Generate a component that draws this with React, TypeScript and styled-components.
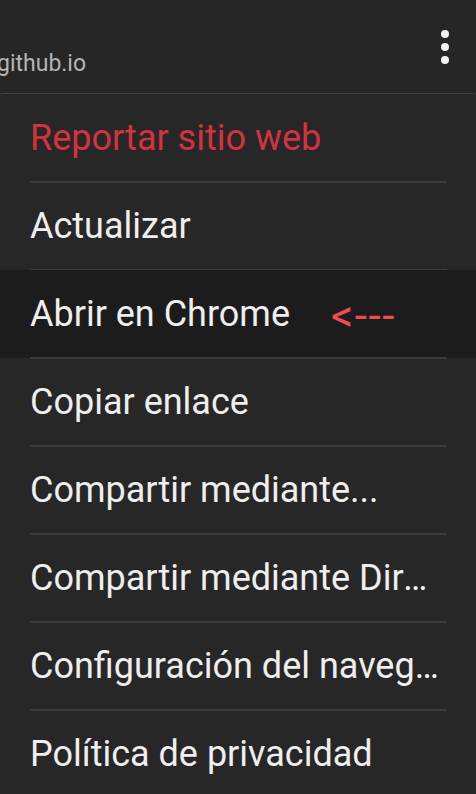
import React from "react";
import styled, { createGlobalStyle } from "styled-components";

const Global = createGlobalStyle`
  html, body { margin: 0; padding: 0; background: #262626; }
  body { font-family: Roboto, "Noto Sans", sans-serif; overflow: hidden; }
`;

const Page = styled.div`
  width: 476px;
  height: 794px;
  background: #262626;
  display: flex;
  flex-direction: column;
  overflow: hidden;
`;

const TopBar = styled.div`
  height: 93px;
  flex: none;
  display: flex;
  align-items: flex-end;
  justify-content: space-between;
`;

const Url = styled.div`
  font-size: 23px;
  color: #b4b4b4;
  margin-left: -3px;
  padding-bottom: 16px;
`;

const MoreButton = styled.div`
  display: flex;
  flex-direction: column;
  gap: 5px;
  align-self: flex-start;
  margin-top: 30px;
  margin-right: 27px;
`;

const Dot = styled.span`
  width: 8px;
  height: 8px;
  border-radius: 50%;
  background: #f2f2f2;
`;

const Menu = styled.div`
  flex: 1;
  background: #272727;
  border-top: 1px solid #414141;
  border-radius: 4px 4px 0 0;
  margin: 0 -1px;
  display: flex;
  flex-direction: column;
`;

const Item = styled.div<{ $active?: boolean; $danger?: boolean; $last?: boolean }>`
  height: 88px;
  flex: none;
  position: relative;
  display: flex;
  align-items: center;
  gap: 40px;
  padding: 0 31px;
  background: ${(p) => (p.$active ? "#1c1c1c" : "transparent")};
  color: ${(p) => (p.$danger ? "#d3323f" : "#eeeeee")};
  font-size: 36px;
  white-space: nowrap;
  &::after {
    content: "";
    display: ${(p) => (p.$last ? "none" : "block")};
    position: absolute;
    left: 31px;
    right: 30px;
    bottom: -1px;
    height: 2px;
    background: #3a3a3a;
  }
`;

const Label = styled.span`
  overflow: hidden;
  text-overflow: ellipsis;
  max-width: 100%;
`;

const Pointer = styled.span`
  color: #ef4b52;
  font-size: 44px;
  line-height: 1;
  letter-spacing: 1.5px;
  margin-left: 1px;
  margin-top: 4px;
`;

const items = [
  { label: "Reportar sitio web", danger: true },
  { label: "Actualizar" },
  { label: "Abrir en Chrome", active: true },
  { label: "Copiar enlace" },
  { label: "Compartir mediante..." },
  { label: "Compartir mediante Direct" },
  { label: "Configuración del navegador" },
  { label: "Política de privacidad" },
];

export default function App() {
  return (
    <>
      <Global />
      <Page>
        <TopBar>
          <Url>github.io</Url>
          <MoreButton>
            <Dot />
            <Dot />
            <Dot />
          </MoreButton>
        </TopBar>
        <Menu>
          {items.map((it, i) => (
            <Item
              key={it.label}
              $active={it.active}
              $danger={it.danger}
              $last={i === items.length - 1}
            >
              <Label>{it.label}</Label>
              {it.active && <Pointer>&lt;---</Pointer>}
            </Item>
          ))}
        </Menu>
      </Page>
    </>
  );
}
